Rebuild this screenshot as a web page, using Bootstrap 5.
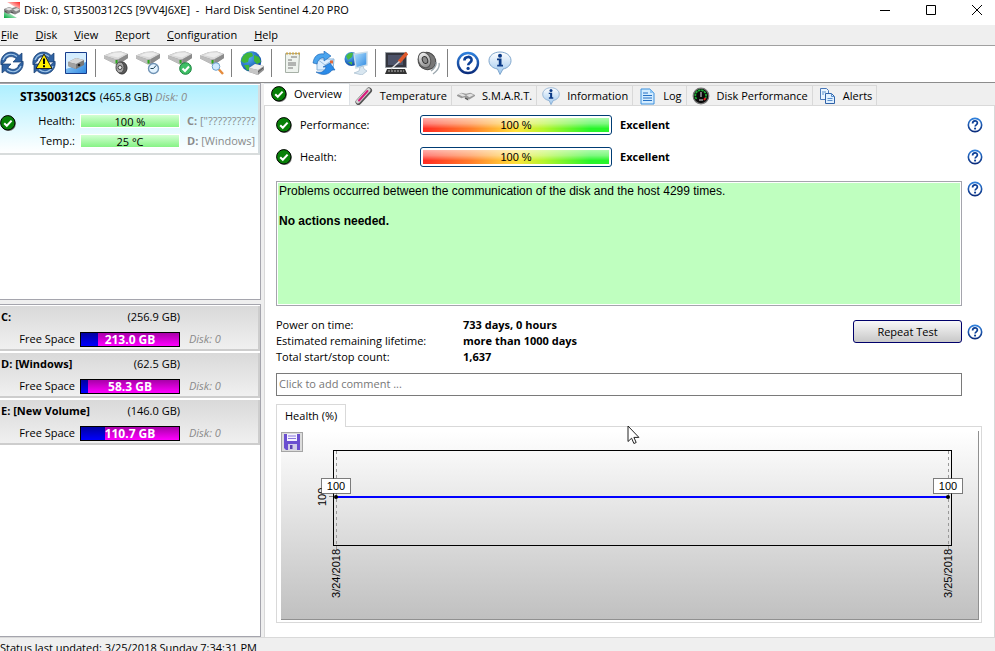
<!DOCTYPE html>
<html lang="en">
<head>
<meta charset="utf-8">
<meta name="viewport" content="width=device-width, initial-scale=1">
<title>Hard Disk Sentinel 4.20 PRO</title>
<link rel="stylesheet" href="https://cdn.jsdelivr.net/npm/bootstrap@5.3.0/dist/css/bootstrap.min.css">
<style>
body { font: 11px/16px "Open Sans", "Noto Sans", sans-serif; color: #000; background: #fff; }
svg { display: block; flex: none; }
button { color: inherit; }
.i16 { width: 16px; height: 16px; }
.i18 { width: 18px; height: 18px; }
.i24 { width: 24px; height: 24px; }
.grey { color: #8a8a8a; }
.titlebar { height: 25px; padding: 0 12px 6px 4px; }
.winbtns { gap: 34px; }
.menubar { background: #efefef; height: 21px; border-bottom: 1px solid #a0a0a0; }
.menubar a { color: #000; text-decoration: none; padding: 0 8px 0 9px; }
.menubar a:first-child { padding-left: 1px; }
.toolbar { height: 37px; border-bottom: 1px solid #8c8c8c; padding-bottom: 2px; gap: 8px; }
.toolbar .sep { width: 1px; height: 28px; background: #808080; margin-left: -1px; }
.work { background: #efefef; }
.side { width: 261px; gap: 4px; }
.listbox { background: #fff; border: 1px solid #a5a5ad; border-left: 0; padding-top: 1px; }
.disks { height: 217px; }
.diskitem { height: 70px; background: linear-gradient(#aeefff, #fff); border-right: 2px solid #d5dde0; border-bottom: 2px solid #d8dcdc; padding-top: 4px; overflow: hidden; }
.diskname { font-size: 12px; margin-right: 1px; }
.diskgrid { display: grid; grid-template-columns: 20px 55px 105px auto; row-gap: 4px; align-items: center; margin-top: 8px; white-space: nowrap; }
.diskgrid .tick { grid-row: 1 / span 2; margin-top: -16px; }
.diskgrid .lbl { text-align: right; }
.greenbar { height: 14px; margin-left: 5px; border: 1px solid #fff; border-radius: 0; background: linear-gradient(#d2ffd2, #86f386); display: block; text-align: center; font-size: 11px; line-height: 13px; color: #000; overflow: visible; }
.driveletters { padding-left: 7px; }
.volume { height: 45px; margin-bottom: 2px; background: linear-gradient(#d9d9d9, #f0f0f0); border-right: 2px solid #cdcdcd; border-bottom: 2px solid #cdcdcd; padding: 3px 0 0 1px; }
.volume .head { width: 179px; }
.volume .usage { display: grid; grid-template-columns: 74px 100px auto; column-gap: 5px; align-items: center; margin-top: 6px; }
.purplebar { position: relative; height: 15px; border: 1px solid #000; border-radius: 0; background: linear-gradient(#a800a8, #ff00ff); font-size: 12px; line-height: 13px; overflow: visible; }
.purplebar .progress-bar { background: linear-gradient(#0000a0, #0000ff); }
.purplebar b { position: absolute; inset: 0; text-align: center; color: #fff; }
.main { margin-left: 3px; }
.toptabs { border: 0; padding-top: 2px; height: 22px; flex-wrap: nowrap; align-items: flex-start; }
.toptabs .nav-link { display: flex; align-items: center; height: 21px; margin: 0; padding: 1px 4px 0 5px; border: 1px solid #d9d9d9; border-left: 0; border-radius: 0; background: #f0f0f0; color: #000; }
.toptabs .nav-link svg { margin-right: 7px; }
.toptabs .nav-link.active { height: 23px; margin-top: -2px; padding: 0 7px 3px 7px; background: #fff; border-bottom: 0; color: #000; }
.page { background: #fff; border: 1px solid #d9d9d9; border-bottom: 0; padding: 10px 11px 14px 11px; }
.metric { height: 18px; margin-bottom: 14px; }
.metric .name { width: 120px; margin-left: 8px; }
.gauge { width: 192px; height: 20px; border: 1px solid #003c74; border-radius: 3px; padding: 2px; background: #fff; margin-right: 8px; }
.gauge div { height: 14px; text-align: center; font: 11px/14px "Liberation Sans", sans-serif; background: linear-gradient(rgba(255,255,255,.62), rgba(255,255,255,.4) 40%, rgba(255,255,255,0) 75%), linear-gradient(90deg, #ff2a22, #ff7a2a 25%, #ffe23c 50%, #b4f52c 65%, #27f52a 90%); }
.help { margin-left: 5px; border: 0; padding: 0; background: none; }
.notes { margin: 1px 0 11px; }
.message { height: 125px; border: 1px solid #a5a5ad; padding: 1px; }
.message div { background: #bfffbf; height: 100%; font: 12px/15px "Liberation Sans", sans-serif; padding: 1px; }
.facts { display: grid; grid-template-columns: 187px auto; margin: 0; }
.facts dt { font-weight: 400; }
.facts dd { font-weight: 700; margin: 0; }
.actions { margin-top: 3px; }
.repeat { height: 23px; width: 109px; padding: 0; border: 1px solid #00006a; border-radius: 3px; background: linear-gradient(#f8f8f8, #c8c8c8); }
.comment { height: 23px; min-height: 0; border: 1px solid #7a7a7a; border-radius: 0; padding: 0 2px 2px; font-size: 11px; line-height: 16px; color: #000; }
.comment::placeholder { color: #777; opacity: 1; }
.indent { margin-right: 21px; }
.charttab { border: 1px solid #d9d9d9; border-bottom: 0; height: 23px; padding: 2px 8px; background: #fff; margin-bottom: -1px; position: relative; align-self: flex-start; }
.chartbox { border: 1px solid #d9d9d9; padding: 4px 2px 2px 4px; margin-right: 1px; min-height: 190px; }
.chart { background: linear-gradient(#fff, #c0c0c0); border-right: 1px solid #909090; border-bottom: 1px solid #909090; }
.save { width: 22px; height: 20px; margin-top: 1px; padding: 1px 2px; border: 1px solid #a5a5a5; background: #dcdcdc; }
.plot { margin: 19px 27px 0 30px; height: 96px; }
.plot svg { overflow: visible; font: 11px "Liberation Sans", sans-serif; }
.status { height: 14px; background: #efefef; border-top: 1px solid #d9d9d9; padding-top: 2px; overflow: hidden; white-space: nowrap; }
.pointer { position: absolute; left: 627px; top: 425px; width: 13px; height: 20px; }
</style>
<script src="https://cdn.jsdelivr.net/npm/bootstrap@5.3.0/dist/js/bootstrap.bundle.min.js"></script>
</head>
<body class="vh-100 d-flex flex-column overflow-hidden">

<svg width="0" height="0" class="position-absolute" aria-hidden="true">
  <defs>
    <linearGradient id="steel" x1="0" y1="0" x2="0" y2="1"><stop offset="0" stop-color="#f2f2f2"/><stop offset="1" stop-color="#8b8b8b"/></linearGradient>
    <linearGradient id="blue" x1="0" y1="0" x2="0" y2="1"><stop offset="0" stop-color="#2f80dc"/><stop offset="1" stop-color="#0a2c7c"/></linearGradient>
    <linearGradient id="bubble" x1="0" y1="0" x2="0" y2="1"><stop offset="0" stop-color="#ffffff"/><stop offset="1" stop-color="#9cc6ee"/></linearGradient>
    <linearGradient id="sky" x1="0" y1="0" x2="1" y2="1"><stop offset="0" stop-color="#b5e4ff"/><stop offset="1" stop-color="#2c86e0"/></linearGradient>
    <linearGradient id="redfade" x1="1" y1="0" x2="0" y2="1"><stop offset="0" stop-color="#ff2222"/><stop offset=".6" stop-color="#ffd8d4"/></linearGradient>
    <linearGradient id="greenfade" x1="0" y1="1" x2="1" y2="0"><stop offset="0" stop-color="#00a83c"/><stop offset=".7" stop-color="#d4f6df"/></linearGradient>
    <radialGradient id="globe" cx=".35" cy=".3" r=".8"><stop offset="0" stop-color="#58b8f8"/><stop offset="1" stop-color="#053c9a"/></radialGradient>
  </defs>
  <symbol id="tick" viewBox="0 0 16 16"><circle cx="8.6" cy="8.8" r="7.2" fill="#777"/><circle cx="7.8" cy="7.8" r="7.2" fill="#078007" stroke="#000"/><path d="M4.2 8.2l2.6 2.6 4.8-5.2" fill="none" stroke="#fff" stroke-width="2"/></symbol>
  <symbol id="ask" viewBox="0 0 24 24"><circle cx="12" cy="12" r="10" fill="#fff" stroke="url(#blue)" stroke-width="2.4"/><path d="M8.4 9.6c0-4.8 7.2-4.8 7.2-.6 0 2.6-3.4 2.8-3.4 5.2" fill="none" stroke="#0c3f96" stroke-width="2.6"/><circle cx="12.1" cy="17.4" r="1.6" fill="#0c3f96"/></symbol>
  <symbol id="drive" viewBox="0 0 24 14"><path d="M0 4.500L9 1l8-.5L24 3v4l-9 6-3 .5L0 7.500z" fill="#9a9a9a"/><path d="M0 4.500L9 1l8-.5L24 3l-9 5-3 .5z" fill="#d9d9d9"/><path d="M4 4.200L10 2l7-.5 4 1.500-7 3.500z" fill="#ececec"/><path d="M0 4.500l12 4v5L0 7.500z" fill="#bdbdbd"/><path d="M15 8l9-5v4l-9 6z" fill="#8b8b8b"/><path d="M11.500 9h2v3.500h-2z" fill="#2ca81c"/></symbol>
  <symbol id="cycle" viewBox="0 0 24 24"><g fill="#2f62a2" stroke="#163c70" stroke-width=".7"><path d="M1 14C-.5 6 6 0 13 1.200c2.500.4 4.500 1.600 6 3.300L22 2v9h-9l3.200-3.300C12 4 6 5.500 5.500 10z"/><path d="M23 10c1.500 8-5 14-12 12.800-2.500-.4-4.500-1.600-6-3.300L2 22v-9h9l-3.200 3.300c4.200 3.700 10.200 2.200 10.700-2.300z"/></g><path d="M3 9c2-5 8-8 14-3.500M21 15c-2 5-8 8-14 3.500" fill="none" stroke="#9ec4e6" stroke-width="1.2"/></symbol>
  <symbol id="info" viewBox="0 0 24 24"><path d="M12 1c6 0 11 3.400 11 8.600 0 4.600-3.600 7.600-8 8.400L12 23.500 9.500 18C4.600 17.200 1 14.200 1 9.600 1 4.400 6 1 12 1z" fill="url(#bubble)" stroke="#7fa6cc"/><circle cx="12" cy="4.7" r="2" fill="#0b3a86"/><path d="M9 7.500h4.500v6.200H15v1.800H9.200v-1.800h1.600V9.300H9z" fill="#0b3a86"/></symbol>
  <symbol id="smalldrive" viewBox="0 0 16 16"><path d="M0 7l4-2 4 1 4-1 4 2v1l-5 3-4-2-3 1-4-2z" fill="#9a9a9a"/><path d="M1 6.500l3-1 4 2-3 1zM8 7l4-1 3 1.200-4 1.800z" fill="#e2e2e2"/><path d="M7 9l3 1.500V12L7 10.500z" fill="#555"/></symbol>
</svg>

<header class="titlebar d-flex align-items-center">
  <svg class="i16" viewBox="0 0 16 16" aria-hidden="true"><path d="M3 0h13v8z" fill="url(#redfade)"/><path d="M0 8l13 8H0z" fill="url(#greenfade)"/><path d="M0 7l5-2 3 1 4-1 4 2v3l-5 2.500L7 11l-3 1-4-2z" fill="#858585"/><path d="M1 7l4-1.500L9 7l-4 1.500zM9 7.500l4-1.500 3 1.500-4 2z" fill="#dedede"/><path d="M1 9.500l3 1.200M7 10l3 1.300" stroke="#444" stroke-dasharray="2 1"/></svg>
  <span class="ms-1 flex-grow-1">Disk: 0, ST3500312CS [9VV4J6XE] &nbsp;-&nbsp; Hard Disk Sentinel 4.20 PRO</span>
  <div class="winbtns d-flex" role="group" aria-label="Window">
    <button class="border-0 p-0 bg-transparent" aria-label="Minimize"><svg width="12" height="12" viewBox="0 0 12 12"><path d="M1 6.500h10" stroke="#000"/></svg></button>
    <button class="border-0 p-0 bg-transparent" aria-label="Maximize"><svg width="12" height="12" viewBox="0 0 12 12"><path d="M1.500 1.500h9v9h-9z" fill="none" stroke="#000"/></svg></button>
    <button class="border-0 p-0 bg-transparent" aria-label="Close"><svg width="12" height="12" viewBox="0 0 12 12"><path d="M1 1l10 10M11 1L1 11" stroke="#000"/></svg></button>
  </div>
</header>

<nav class="menubar d-flex align-items-center" aria-label="Menu">
  <a href="#"><u>F</u>ile</a><a href="#"><u>D</u>isk</a><a href="#"><u>V</u>iew</a><a href="#"><u>R</u>eport</a><a href="#"><u>C</u>onfiguration</a><a href="#"><u>H</u>elp</a>
</nav>

<div class="toolbar d-flex align-items-center" role="toolbar" aria-label="Tools">
  <button class="border-0 p-0 bg-transparent" aria-label="Refresh"><svg class="i24"><use href="#cycle"/></svg></button>
  <button class="border-0 p-0 bg-transparent" aria-label="Refresh warnings"><svg class="i24" viewBox="0 0 24 24"><use href="#cycle"/><path d="M12 3l8 14.500H4z" fill="#ffee00" stroke="#222" stroke-linejoin="round"/><path d="M12 7.500v5.500M12 14.300v2" stroke="#000" stroke-width="2"/></svg></button>
  <button class="border-0 p-0 bg-transparent" aria-label="Disk window"><svg class="i24" viewBox="0 0 24 24"><path d="M1.500 1.500h21v21h-21z" fill="url(#sky)" stroke="#163c8c"/><path d="M2 2h20v9L2 18z" fill="#d4edff"/><path d="M4 11l8-4 8 2v5l-8 4-8-3z" fill="#777"/><path d="M4 11l8-4 8 2-8 4z" fill="#d6d6d6"/><path d="M4 11l8 2v5l-8-3z" fill="#a2a2a2"/><circle cx="15" cy="14" r="1.3" fill="#222"/></svg></button>
  <span class="sep"></span>
  <button class="border-0 p-0 bg-transparent" aria-label="Disk sound"><svg class="i24" viewBox="0 0 24 24"><use href="#drive" width="24" height="14"/><ellipse cx="18" cy="17" rx="5" ry="6" fill="#5a5a5a" stroke="#333"/><ellipse cx="16" cy="16.5" rx="4" ry="5.5" fill="#a8a8a8" stroke="#444"/><circle cx="16" cy="16.5" r="2" fill="#eee" stroke="#444"/></svg></button>
  <button class="border-0 p-0 bg-transparent" aria-label="Disk timing"><svg class="i24" viewBox="0 0 24 24"><use href="#drive" width="24" height="14"/><circle cx="17.5" cy="17.5" r="5" fill="#e3f3ff" stroke="#6f92b4" stroke-width="1.4"/><path d="M17.500 17.500l2.500-3M17.500 17.500h-3" stroke="#245"/></svg></button>
  <button class="border-0 p-0 bg-transparent" aria-label="Disk test"><svg class="i24" viewBox="0 0 24 24"><use href="#drive" width="24" height="14"/><circle cx="17.5" cy="17.5" r="5.8" fill="#3fbf66" stroke="#15803a"/><path d="M14.500 17.500l2.500 2.500 4-4.500" fill="none" stroke="#fff" stroke-width="2"/></svg></button>
  <button class="border-0 p-0 bg-transparent" aria-label="Surface scan"><svg class="i24" viewBox="0 0 24 24"><use href="#drive" width="24" height="14"/><path d="M18.500 18l4.500 5" stroke="#e58b3c" stroke-width="2.4"/><circle cx="16" cy="15.5" r="3.8" fill="#cfeaff" stroke="#6ba0cc"/></svg></button>
  <span class="sep"></span>
  <button class="border-0 p-0 bg-transparent" aria-label="Network disks"><svg class="i24" viewBox="0 0 24 24"><circle cx="11" cy="10.5" r="10.3" fill="url(#globe)"/><path d="M3 5c3-4 7-4 9-3l1 3-4 2-1 4-4 1-3-2zM14 4l5 2 2 5-4 2-3-3zM4 14l5 0 1 5-3 .5z" fill="#3fb53a"/><path d="M9 17l6-4 9 2v4l-6 5-9-3z" fill="#8f8f8f"/><path d="M9 17l6-4 9 2-6 4z" fill="#eee"/><path d="M9 17l9 2v5l-9-3z" fill="#c6c6c6"/><path d="M18 21l5-4" stroke="#555"/></svg></button>
  <span class="sep"></span>
  <button class="border-0 p-0 bg-transparent" aria-label="Report"><svg class="i24" viewBox="0 0 24 24"><path d="M5.500 2.500h14l-1 19h-13z" fill="#eef3ee" stroke="#a6b0a6"/><path d="M6 2.500h14" stroke="#c9a54f" stroke-width="2" stroke-dasharray="2 1"/><path d="M11 6h6M8 9h4M8 12h8M8 14h8M8 17h5" stroke="#777"/></svg></button>
  <button class="border-0 p-0 bg-transparent" aria-label="Send report"><svg class="i24" viewBox="0 0 24 24"><path d="M5 8h17l-1 11H5z" fill="#dceeff" stroke="#88b4da"/><path d="M5 8l8 6 9-6" fill="none" stroke="#9cc0e0"/><path d="M18 9.500h3v3h-3z" fill="#e06a3c"/><path d="M1 12C2 5 6 2 12 3V0l7 5-7 5V7C9 6.500 6 8 5 13z" fill="#4aa4ee" stroke="#1760b0" stroke-width=".6"/><path d="M4 21c6 1 9-1 10-5h-3l7-4 5 7-3 0c-3 5-10 6-16 2z" fill="#2b8be8" stroke="#1760b0" stroke-width=".6"/></svg></button>
  <button class="border-0 p-0 bg-transparent" aria-label="Remote monitoring"><svg class="i24" viewBox="0 0 24 24"><circle cx="7.5" cy="8" r="7" fill="url(#globe)"/><path d="M2 5c2-3 5-4 7-3l-1 4-4 3zM4 11l4 0 0 3z" fill="#48ba45"/><path d="M10 3l13-2v13l-11 3z" fill="url(#sky)" stroke="#cbdde9" stroke-width="1.5"/><path d="M16 16l3-1 1 3 3 2-5 4-8-2 5-2z" fill="#d8e6f0" stroke="#9ab4c8" stroke-width=".6"/></svg></button>
  <span class="sep"></span>
  <button class="border-0 p-0 bg-transparent" aria-label="Settings"><svg class="i24" viewBox="0 0 24 24"><path d="M1.500 1.500h21v15h-21z" fill="#34363f" stroke="#9aa0a6"/><path d="M4 4h15v10H4z" fill="#4c5268"/><path d="M3 18h18l2 5H1z" fill="#333"/><path d="M4 20h16" stroke="#bbb" stroke-dasharray="2 1"/><path d="M23 2l-8 9" stroke="#e0592c" stroke-width="3.4"/><path d="M15.500 10.500L7 18" stroke="#ddd" stroke-width="1.6"/></svg></button>
  <button class="border-0 p-0 bg-transparent" aria-label="Sound settings"><svg class="i24" viewBox="0 0 24 24"><ellipse cx="11" cy="10" rx="9" ry="8.5" transform="rotate(35 11 10)" fill="#777" stroke="#444"/><ellipse cx="8.5" cy="9" rx="6" ry="8" transform="rotate(-20 8.5 9)" fill="url(#steel)" stroke="#555"/><ellipse cx="9" cy="9" rx="2.6" ry="3.6" transform="rotate(-20 9 9)" fill="#8a8a8a" stroke="#333"/><path d="M20 11c1 3-2 7-5 9M23 12c1 4-2 8-6 11" fill="none" stroke="#9ba7ae" stroke-width="1.3"/></svg></button>
  <span class="sep"></span>
  <button class="border-0 p-0 bg-transparent" aria-label="Help"><svg class="i24"><use href="#ask"/></svg></button>
  <button class="border-0 p-0 bg-transparent" aria-label="About"><svg class="i24"><use href="#info"/></svg></button>
</div>

<div class="work d-flex flex-grow-1 overflow-hidden">
  <aside class="side d-flex flex-column flex-shrink-0">
    <div class="listbox disks">
      <div class="diskitem">
        <div class="text-nowrap ms-3 ps-1"><b class="diskname">ST3500312CS</b> (465.8 GB) <i class="grey">Disk: 0</i></div>
        <div class="diskgrid">
          <svg class="i16 tick" aria-hidden="true"><use href="#tick"/></svg>
          <span class="lbl">Health:</span><div class="progress greenbar">100 %</div><span class="driveletters grey"><b>C:</b> ["??????????</span>
          <span class="lbl">Temp.:</span><div class="progress greenbar">25 °C</div><span class="driveletters grey"><b>D:</b> [Windows]</span>
        </div>
      </div>
    </div>
    <div class="listbox flex-grow-1 mb-0">
      <div class="volume">
        <div class="head d-flex justify-content-between"><b>C:</b><span>(256.9 GB)</span></div>
        <div class="usage"><span class="text-end">Free Space</span><div class="progress purplebar"><div class="progress-bar" style="width:17%"></div><b>213.0 GB</b></div><i class="grey ms-1">Disk: 0</i></div>
      </div>
      <div class="volume">
        <div class="head d-flex justify-content-between"><b>D: [Windows]</b><span>(62.5 GB)</span></div>
        <div class="usage"><span class="text-end">Free Space</span><div class="progress purplebar"><div class="progress-bar" style="width:7%"></div><b>58.3 GB</b></div><i class="grey ms-1">Disk: 0</i></div>
      </div>
      <div class="volume">
        <div class="head d-flex justify-content-between"><b>E: [New Volume]</b><span>(146.0 GB)</span></div>
        <div class="usage"><span class="text-end">Free Space</span><div class="progress purplebar"><div class="progress-bar" style="width:24%"></div><b>110.7 GB</b></div><i class="grey ms-1">Disk: 0</i></div>
      </div>
    </div>
  </aside>

  <main class="main d-flex flex-column flex-grow-1">
    <div class="nav nav-tabs toptabs" role="tablist">
      <button class="nav-link active" role="tab" aria-selected="true"><svg class="i16"><use href="#tick"/></svg>Overview</button>
      <button class="nav-link" role="tab"><svg class="i18" viewBox="0 0 18 18"><path d="M3.500 15L14 3.500" stroke="#555" stroke-width="6" stroke-linecap="round"/><path d="M3 14.500L13.500 3" stroke="#d6d6d6" stroke-width="4" stroke-linecap="round"/><path d="M4 13.500L12.500 4" stroke="#d81b7c" stroke-width="2" stroke-linecap="round"/></svg>Temperature</button>
      <button class="nav-link" role="tab"><svg class="i18"><use href="#smalldrive"/></svg>S.M.A.R.T.</button>
      <button class="nav-link" role="tab"><svg class="i18"><use href="#info"/></svg>Information</button>
      <button class="nav-link" role="tab"><svg class="i18" viewBox="0 0 18 18"><path d="M3 2h9l4 4v11H3z" fill="#d3ecff" stroke="#3b8fdc"/><path d="M12 2v4h4z" fill="#8cc4f2"/><path d="M5 6h5M5 8.500h9M5 11h9M5 13.500h9" stroke="#2671c4"/></svg>Log</button>
      <button class="nav-link" role="tab"><svg class="i18" viewBox="0 0 18 18"><circle cx="9" cy="9" r="7.8" fill="#0a0a0a" stroke="#777" stroke-width="1.2"/><path d="M4.500 12A5.400 5.400 0 1 1 13.500 11" fill="none" stroke="#1dac35" stroke-width="1.8" stroke-dasharray="2.4 .7"/><path d="M13.500 11l-1.500 2" stroke="#e22" stroke-width="2"/><path d="M9 10V5M7 13h4" stroke="#ddd"/></svg>Disk Performance</button>
      <button class="nav-link" role="tab"><svg class="i18" viewBox="0 0 18 18"><path d="M2.500 1.500h6l2 2v9h-8z" fill="#e8f4ff" stroke="#4a78b8"/><path d="M7.500 6.500h6l3 3v7h-9z" fill="#e0f0ff" stroke="#2f62a8"/><path d="M13.500 6.500v3h3M4 5h4M4 7h2M9.500 11.500h5M9.500 13.500h5" fill="none" stroke="#5b90cc"/></svg>Alerts</button>
    </div>
    <section class="page flex-grow-1 d-flex flex-column" role="tabpanel">
      <div class="metric d-flex align-items-center">
        <svg class="i16" aria-hidden="true"><use href="#tick"/></svg><span class="name">Performance:</span>
        <div class="gauge"><div>100 %</div></div><b class="flex-grow-1">Excellent</b>
        <button class="help" aria-label="About performance"><svg class="i16"><use href="#ask"/></svg></button>
      </div>
      <div class="metric d-flex align-items-center">
        <svg class="i16" aria-hidden="true"><use href="#tick"/></svg><span class="name">Health:</span>
        <div class="gauge"><div>100 %</div></div><b class="flex-grow-1">Excellent</b>
        <button class="help" aria-label="About health"><svg class="i16"><use href="#ask"/></svg></button>
      </div>
      <div class="notes d-flex align-items-start">
        <div class="message flex-grow-1"><div>Problems occurred between the communication of the disk and the host 4299 times.<br><br><b>No actions needed.</b></div></div>
        <button class="help" aria-label="About the message"><svg class="i16"><use href="#ask"/></svg></button>
      </div>
      <div class="d-flex align-items-start">
        <dl class="facts flex-grow-1">
          <dt>Power on time:</dt><dd>733 days, 0 hours</dd>
          <dt>Estimated remaining lifetime:</dt><dd>more than 1000 days</dd>
          <dt>Total start/stop count:</dt><dd>1,637</dd>
        </dl>
        <div class="actions d-flex align-items-center">
          <button class="repeat">Repeat Test</button>
          <button class="help" aria-label="About the test"><svg class="i16"><use href="#ask"/></svg></button>
        </div>
      </div>
      <div class="indent mt-2"><input class="form-control comment" type="text" placeholder="Click to add comment ..." aria-label="Comment"></div>
      <button class="charttab mt-2" role="tab" aria-selected="true">Health (%)</button>
      <div class="chartbox flex-grow-1 d-flex">
        <div class="chart flex-grow-1 d-flex align-items-start">
          <button class="save" aria-label="Save chart"><svg class="i16" viewBox="0 0 16 16"><path d="M0 0h16v16H2l-2-2z" fill="#6a4fd0"/><path d="M3 0h10v7H3z" fill="#f4f2ff"/><path d="M4 2h8M4 4.500h8" stroke="#8a78dc"/><path d="M4 10h9v6H4z" fill="#d0cce8"/><path d="M6 11h2.500v4H6z" fill="#5a44b0"/></svg></button>
          <div class="plot flex-grow-1">
            <svg width="100%" height="96" role="img" aria-label="Health 100 on 3/24/2018 and 3/25/2018">
              <rect x=".5" y=".5" width="100%" height="95" fill="none" stroke="#000"/>
              <path d="M-4 46.500h4" stroke="#888"/>
              <text transform="translate(-7 56) rotate(-90)">100</text>
              <svg x="3" overflow="visible"><path d="M.5 1v95" stroke="#999" stroke-dasharray="3 3"/><path d="M.5 96v4" stroke="#999"/><text text-anchor="end" transform="translate(4 99) rotate(-90)">3/24/2018</text></svg>
              <svg x="100%" overflow="visible"><path d="M-2.500 1v95" stroke="#999" stroke-dasharray="3 3"/><path d="M-2.500 96v4" stroke="#999"/><text text-anchor="end" transform="translate(1 99) rotate(-90)">3/25/2018</text></svg>
              <line x1="3" y1="47" x2="99.6%" y2="47" stroke="#00f" stroke-width="2"/>
              <svg overflow="visible"><circle cx="3" cy="47" r="2" fill="#000"/><rect x="-11.5" y="28.5" width="29" height="15" fill="#fff" stroke="#000" stroke-dasharray="1 1"/><text x="3" y="40" text-anchor="middle">100</text></svg>
              <svg x="100%" overflow="visible"><circle cx="-3" cy="47" r="2" fill="#000"/><rect x="-17.5" y="28.5" width="29" height="15" fill="#fff" stroke="#000" stroke-dasharray="1 1"/><text x="-3" y="40" text-anchor="middle">100</text></svg>
            </svg>
          </div>
        </div>
      </div>
    </section>
  </main>
</div>
<footer class="status">Status last updated: 3/25/2018 Sunday 7:34:31 PM</footer>

<svg class="pointer" viewBox="0 0 13 20" aria-hidden="true"><path d="M1 1v15.500l3.600-3.300 2.300 5.300 2.300-1-2.300-5.100h5z" fill="#fff" stroke="#222"/></svg>
</body>
</html>
